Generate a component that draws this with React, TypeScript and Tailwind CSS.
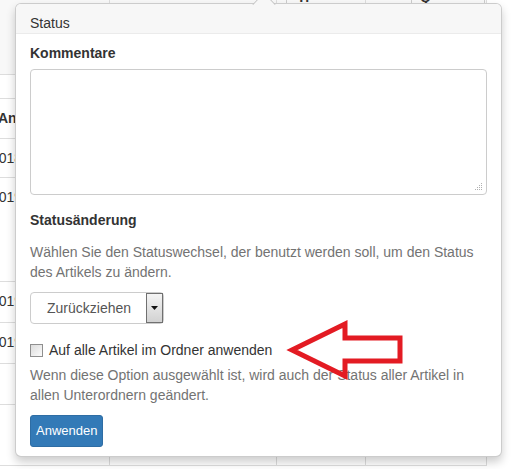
import React from "react";

const rows = [
  { h: "h-[75px]", text: "", bold: false, bg: "bg-[#f8f8f8]", ml: "" },
  { h: "h-[24px]", text: "", bold: false, bg: "bg-white", ml: "" },
  { h: "h-[40px]", text: "Andere", bold: true, bg: "bg-white", ml: "ml-[-2px]" },
  { h: "h-[39px]", text: "2018", bold: false, bg: "bg-white", ml: "ml-[-9px]" },
  { h: "h-[104px]", text: "2019", bold: false, bg: "bg-white", ml: "ml-[-9px]" },
  { h: "h-[41px]", text: "2019", bold: false, bg: "bg-white", ml: "ml-[-9px]" },
  { h: "h-[41px]", text: "2019", bold: false, bg: "bg-white", ml: "ml-[-9px]" },
  { h: "h-[41px]", text: "", bold: false, bg: "bg-white", ml: "" },
  { h: "h-[61px]", text: "", bold: false, bg: "bg-white", ml: "" },
];

const Background = () => {
  return (
    <div className="flex flex-col w-[487px]">
      {rows.map((row, i) => (
        <div
          key={i}
          className={`flex w-full border-b border-[#dddddd] ${row.h} ${row.bg}`}
        >
          <div className="flex items-start pt-[9px] w-[110px] border-r border-[#dddddd] overflow-hidden">
            {row.text && (
              <span
                className={`whitespace-nowrap ${row.ml} ${row.bold ? "font-bold" : ""}`}
              >
                {row.text}
              </span>
            )}
          </div>
          <div className="w-[167px] border-r border-[#dddddd]" />
          <div className="w-[89px] border-r border-[#dddddd]" />
          <div className="w-[121px] border-r border-[#dddddd]" />
        </div>
      ))}
    </div>
  );
};

const TopStrip = () => {
  return (
    <div className="absolute left-0 top-0 flex h-[6px] w-full">
      <div className="w-[287px] border-r border-[#cccccc]" />
      <div className="w-[125px] border-r border-[#cccccc] overflow-hidden">
        <span className="block mt-[-9px] ml-[10px] font-bold leading-[12px]">Ti</span>
      </div>
      <div className="w-[73px] border-r border-[#cccccc] overflow-hidden">
        <span className="block mt-[-9px] ml-[8px] font-bold leading-[12px]">Q</span>
      </div>
    </div>
  );
};

const App = () => {
  return (
    <div className="relative w-[519px] h-[469px] overflow-hidden bg-white font-['Liberation_Sans',Arial,sans-serif] text-[14px] leading-5 text-[#333333]">
      <Background />
      <TopStrip />

      {/* popover */}
      <div className="absolute left-[15px] top-[3px] w-[487px] rounded-[6px] border border-black/20 bg-white shadow-[0_5px_10px_rgba(0,0,0,0.2)]">
        <svg
          className="absolute left-[236px] top-[-12px]"
          width="24"
          height="13"
          viewBox="0 0 24 13"
        >
          <polygon points="1,12.5 12,1 23,12.5" fill="#f7f7f7" stroke="#bdbdbd" strokeWidth="1" />
          <rect x="1.5" y="12" width="21" height="1" fill="#f7f7f7" />
        </svg>

        <div className="h-[30px] rounded-t-[5px] border-b border-[#ebebeb] bg-[#f7f7f7] pl-[14px] pt-[9px] leading-5">
          Status
        </div>

        <div className="flex flex-col px-[14px] pt-[9px] pb-[9px]">
          <p className="font-bold leading-5">Kommentare</p>
          <div className="relative mt-[6px] h-[126px] w-full rounded-[4px] border border-[#cccccc] bg-white">
            <svg className="absolute right-[3px] bottom-[3px]" width="8" height="8" viewBox="0 0 8 8">
              <rect x="6" y="0" width="1" height="1" fill="#b0b0b0" />
              <rect x="4" y="2" width="1" height="1" fill="#b0b0b0" />
              <rect x="6" y="2" width="1" height="1" fill="#b0b0b0" />
              <rect x="2" y="4" width="1" height="1" fill="#b0b0b0" />
              <rect x="4" y="4" width="1" height="1" fill="#b0b0b0" />
              <rect x="6" y="4" width="1" height="1" fill="#b0b0b0" />
              <rect x="0" y="6" width="1" height="1" fill="#b0b0b0" />
              <rect x="2" y="6" width="1" height="1" fill="#b0b0b0" />
              <rect x="4" y="6" width="1" height="1" fill="#b0b0b0" />
              <rect x="6" y="6" width="1" height="1" fill="#b0b0b0" />
            </svg>
          </div>

          <p className="mt-[15px] font-bold leading-5">Statusänderung</p>
          <p className="mt-[12px] text-[#737373] leading-5">
            Wählen Sie den Statuswechsel, der benutzt werden soll, um den Status des Artikels zu ändern.
          </p>

          <div className="mt-[10px] flex h-[32px] w-[134px] items-center justify-between rounded-[4px] border border-[#cccccc] bg-white pl-[16px]">
            <span className="text-[#555555]">Zurückziehen</span>
            <span className="flex h-[30px] w-[17px] items-center justify-center border border-[#707070] bg-gradient-to-b from-[#f4f4f4] to-[#d2d2d2]">
              <svg width="7" height="4" viewBox="0 0 7 4">
                <polygon points="0,0 7,0 3.5,4" fill="#111111" />
              </svg>
            </span>
          </div>

          <label className="mt-[16px] flex items-center gap-[6px] leading-5">
            <span className="h-[13px] w-[13px] border border-[#8f8f8f] bg-gradient-to-br from-[#dcdcdc] to-[#fbfbfb]" />
            <span>Auf alle Artikel im Ordner anwenden</span>
          </label>
          <p className="mt-[5px] text-[#737373] leading-5">
            Wenn diese Option ausgewählt ist, wird auch der Status aller Artikel in allen Unterordnern geändert.
          </p>

          <div className="mt-[10px] flex">
            <button className="flex h-[32px] items-center rounded-[3px] border border-[#2e6da4] bg-[#337ab7] px-[5px] text-[13px] text-white">
              Anwenden
            </button>
          </div>
        </div>
      </div>

      {/* red annotation arrow */}
      <svg className="pointer-events-none absolute left-0 top-0" width="519" height="469" viewBox="0 0 519 469">
        <polygon
          points="292,350 345,324 345,338 400,338 400,361 345,361 345,376"
          fill="none"
          stroke="#e31b23"
          strokeWidth="5"
          strokeLinejoin="miter"
        />
      </svg>
    </div>
  );
};

export default App;
